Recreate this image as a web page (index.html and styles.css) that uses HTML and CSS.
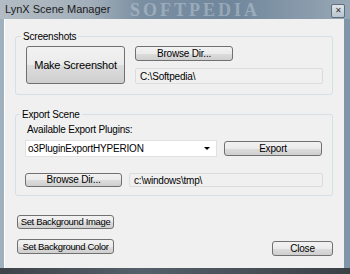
FILE: index.html
```html
<!DOCTYPE html>
<html lang="en">
<head>
    <meta charset="UTF-8">
    <title>LynX Scene Manager</title>
    <link rel="stylesheet" href="styles.css">
</head>
<body>

    <div class="window">
        <!-- Title bar -->
        <div class="titlebar">
            <span class="title">LynX Scene Manager</span>
            <span class="watermark">SOFTPEDIA</span>
            <span class="close-x">&#x2715;</span>
        </div>

        <div class="client">
            <!-- Screenshots -->
            <fieldset class="group group-shots">
                <legend>Screenshots</legend>
                <div class="shots-row">
                    <button class="btn btn-big">Make Screenshot</button>
                    <div class="shots-col">
                        <button class="btn btn-browse">Browse Dir...</button>
                        <div class="field field-shots">C:\Softpedia\</div>
                    </div>
                </div>
            </fieldset>

            <!-- Export -->
            <fieldset class="group group-export">
                <legend>Export Scene</legend>
                <div class="label">Available Export Plugins:</div>
                <div class="row row-plugin">
                    <div class="combo">
                        <span>o3PluginExportHYPERION</span>
                        <span class="arrow"></span>
                    </div>
                    <button class="btn btn-export">Export</button>
                </div>
                <div class="row row-dir">
                    <button class="btn btn-browse2">Browse Dir...</button>
                    <div class="field field-dir">c:\windows\tmp\</div>
                </div>
            </fieldset>

            <!-- Bottom buttons -->
            <div class="bottom">
                <div class="bg-buttons">
                    <button class="btn btn-bg">Set Background Image</button>
                    <button class="btn btn-bg btn-bg2">Set Background Color</button>
                </div>
                <button class="btn btn-close">Close</button>
            </div>
        </div>

        <div class="strip"></div>
    </div>

</body>
</html>
```

FILE: styles.css
```css
/* General */
body {
    margin: 0;
    width: 350px;
    height: 274px;
    overflow: hidden;
    font-family: 'Liberation Sans', Arial, sans-serif;
    font-size: 10px;
    letter-spacing: -0.2px;
    color: #000;
}

.window {
    width: 350px;
    height: 274px;
    background: linear-gradient(90deg, #9fb0bf 0px, #8ea1b2 40%, #7f95a8 100%);
    display: flex;
    flex-direction: column;
}

/* Title bar */
.titlebar {
    height: 19px;
    position: relative;
    overflow: hidden;
    background: linear-gradient(90deg, #b3bcc4 0px, #a2afba 90px, #7b8fa2 140px, #6f869b 230px, #8497a8 290px, #97a7b5 350px);
}

.title {
    position: absolute;
    left: 5px;
    top: 3px;
    font-size: 11px;
    letter-spacing: 0;
    color: #1a1a1a;
}

.watermark {
    position: absolute;
    left: 130px;
    top: 1px;
    font-family: 'Liberation Serif', serif;
    font-size: 18px;
    line-height: 18px;
    font-weight: bold;
    letter-spacing: 3px;
    color: rgba(225, 233, 241, 0.35);
}

.close-x {
    position: absolute;
    left: 331px;
    top: 4px;
    width: 12px;
    height: 12px;
    border: 1px solid #5d6e7e;
    border-radius: 2px;
    background: linear-gradient(#dfe5ea, #b9c4ce);
    font-size: 8px;
    line-height: 12px;
    letter-spacing: 0;
    text-align: center;
    color: #333;
}

/* Client area */
.client {
    margin: 0 6px 0 4px;
    height: 249px;
    background: #f0f0f0;
    border-left: 1px solid #fff;
    box-sizing: border-box;
    display: flex;
    flex-direction: column;
}

.strip {
    flex: 1;
    background: linear-gradient(90deg, #3e4349, #55606a 40%, #3b4047);
}

/* Group boxes */
.group {
    border: 1px solid #d5dfe5;
    border-radius: 3px;
    margin: 0 11px 0 10px;
    min-width: 0;
}

.group legend {
    line-height: 13px;
    padding: 0 2px;
    margin-left: -5px;
}

.group-shots {
    margin-top: 11px;
    padding: 3px 9px 10px 10px;
}

.group-export {
    margin-top: 13px;
    padding: 2px 9px 8px 9px;
}

/* Buttons */
.btn {
    font-family: 'Liberation Sans', Arial, sans-serif;
    font-size: 10px;
    letter-spacing: -0.2px;
    white-space: nowrap;
    color: #000;
    border: 1px solid #707070;
    border-radius: 3px;
    background: linear-gradient(#f2f2f2 0%, #ebebeb 50%, #dddddd 51%, #cfcfcf 100%);
    padding: 0;
    margin: 0;
    box-sizing: border-box;
    line-height: 12px;
}

.shots-row {
    display: flex;
    gap: 10px;
}

.btn-big {
    width: 99px;
    height: 38px;
    font-size: 11px;
}

.shots-col {
    display: flex;
    flex-direction: column;
    gap: 7px;
    width: 188px;
}

.btn-browse {
    width: 98px;
    height: 15px;
}

/* Text fields */
.field {
    height: 16px;
    box-sizing: border-box;
    border: 1px solid #dcdcdc;
    border-radius: 2px;
    background: #f0f0f0;
    padding: 1px 4px;
    line-height: 13px;
    white-space: nowrap;
}

.label {
    margin-left: 2px;
    line-height: 13px;
}

.row {
    display: flex;
    align-items: center;
    gap: 7px;
}

.row-plugin {
    margin-top: 4px;
}

.combo {
    width: 192px;
    height: 17px;
    box-sizing: border-box;
    border: 1px solid #e1e1e1;
    background: #fff;
    display: flex;
    align-items: center;
    justify-content: space-between;
    padding: 0 6px 0 2px;
}

.arrow {
    width: 0;
    height: 0;
    border-left: 3px solid transparent;
    border-right: 3px solid transparent;
    border-top: 3px solid #000;
}

.btn-export {
    width: 98px;
    height: 15px;
}

.row-dir {
    margin-top: 16px;
}

.btn-browse2 {
    width: 97px;
    height: 14px;
}

.field-dir {
    flex: 1;
    height: 14px;
    line-height: 11px;
}

/* Bottom */
.bottom {
    display: flex;
    justify-content: space-between;
    align-items: flex-end;
    margin: 19px 11px 0 12px;
}

.bg-buttons {
    display: flex;
    flex-direction: column;
    gap: 10px;
}

.btn-bg {
    width: 97px;
    height: 14px;
    text-align: center;
    font-size: 9.5px;
    letter-spacing: -0.35px;
}

.btn-bg2 {
    height: 15px;
}

.btn-close {
    width: 61px;
    height: 15px;
    margin-bottom: -2px;
}
```
